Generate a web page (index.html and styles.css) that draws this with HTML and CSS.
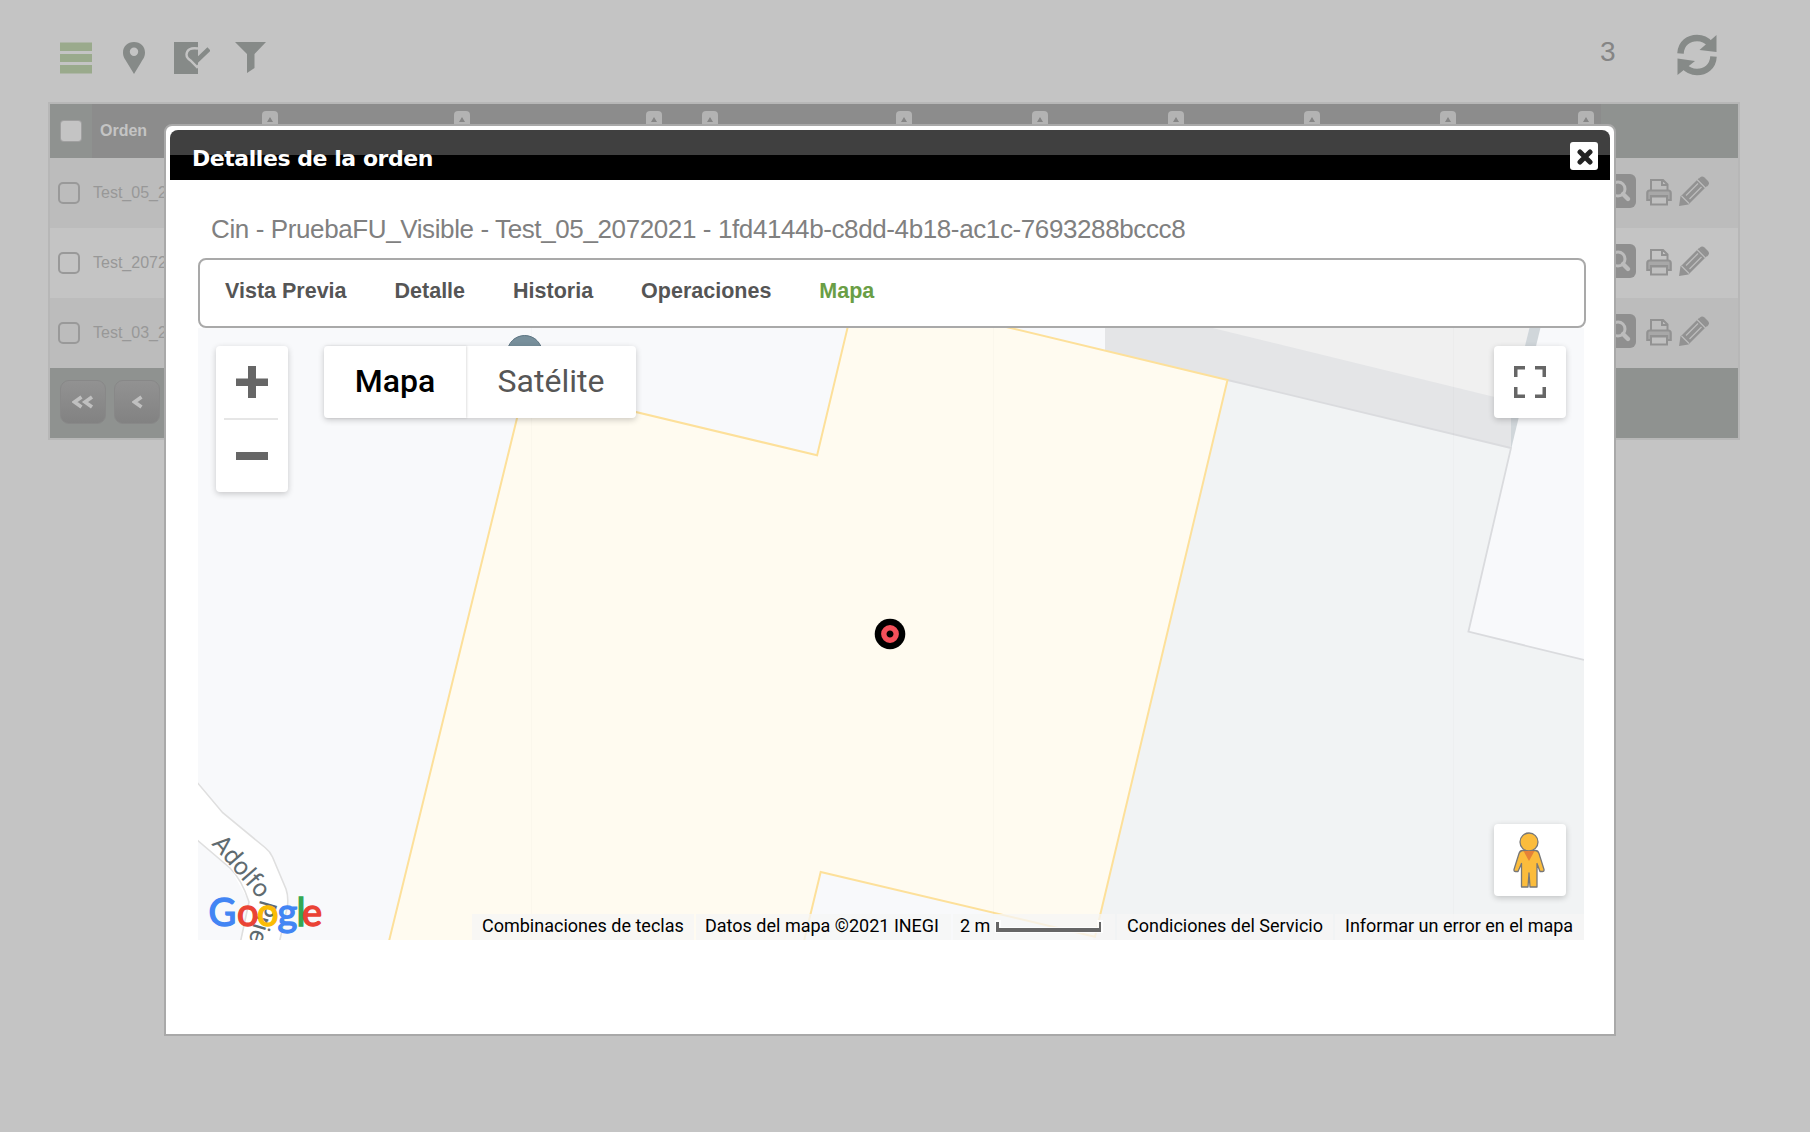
FILE: index.html
```
<!DOCTYPE html>
<html lang="es">
<head>
<meta charset="utf-8">
<title>Detalles de la orden</title>
<link rel="stylesheet" href="styles.css">
</head>
<body>
<svg class="defs" width="0" height="0" aria-hidden="true">
  <symbol id="i-search" viewBox="0 0 34 34">
    <rect width="34" height="34" rx="6" fill="#8f8f8f"/>
    <circle cx="16" cy="15" r="7" fill="none" stroke="#bcbcbc" stroke-width="3"/>
    <path d="M21 20l5 5" stroke="#bcbcbc" stroke-width="4.400" stroke-linecap="round"/>
  </symbol>
  <symbol id="i-print" viewBox="0 0 26 28">
    <path d="M5 12.500V2h12l4.500 4.500v6M16 2v5h5" fill="none" stroke="#929292" stroke-width="2"/>
    <path d="M1.300 22v-7q0-2.500 2.500-2.500h18.400q2.500 0 2.500 2.500v7H21v-4H5v4z" fill="#a8a8a8" stroke="#929292" stroke-width="2.200"/>
    <path d="M5 18.500h16V26.500H5z" fill="#c0c0c0" stroke="#929292" stroke-width="2"/>
  </symbol>
  <symbol id="i-pencil" viewBox="0 0 30 30">
    <path d="M0 30l1.500-9.500L20 2l8 8L9.500 28.500z" fill="#929292"/>
    <path d="M21 1.500q2-2 4.500 0l3.500 3.500q2 2.300 0 4.500l-1 1-8-8z" fill="#929292"/>
    <path d="M18 3.500l8.500 8.500M2.500 20l7.500 7.500M7 19.500L19 7.500M10.500 23L22.500 11" stroke="#bcbcbc" stroke-width="1.300"/>
  </symbol>
</svg>

<main class="page">
  <header class="toolbar">
    <svg class="tool tool-list" width="32" height="32" viewBox="0 0 32 32"><path d="M0 .5h32v8.500H0zM0 12h32v8H0zM0 23h32v8.500H0z" fill="#9aaa8c"/></svg>
    <svg class="tool tool-pin" width="22" height="32" viewBox="0 0 22 32"><path fill-rule="evenodd" d="M11 0C4.500 0 0 4.500 0 10.500 0 15 2 17 4 20.500L11 32l7-11.500c2-3.500 4-5.500 4-10C22 4.500 17.500 0 11 0zm0 5.500a4.200 4.200 0 1 1 0 8.400 4.200 4.200 0 0 1 0-8.400z" fill="#868a88"/></svg>
    <svg class="tool tool-check" width="36" height="32" viewBox="0 0 36 32"><path d="M0 0h24v32H0z" fill="#868a88"/><path d="M24 6.500q-11-1.500-11.500 6 0 3.500 4 6l6.500 6.500 2-2" fill="none" stroke="#c4c4c4" stroke-width="2.400"/><path d="M17 11.500l6.500 6.500L35 7" fill="none" stroke="#868a88" stroke-width="4.600"/></svg>
    <svg class="tool tool-filter" width="31" height="31" viewBox="0 0 31 31"><path d="M0 0h31L19.500 12v14L12 31V12z" fill="#868a88"/></svg>
    <span class="count">3</span>
    <svg class="refresh" width="40" height="42" viewBox="0 0 40 42"><g fill="none" stroke="#868a88" stroke-width="6.500"><path d="M3.500 19.500C4 9 12 4 20 4q8 0 13 6"/><path d="M36.500 22.500C36 33 28 38 20 38q-8 0-13-6"/></g><path d="M39.500 1v17L22.500 16zM.5 41V24.500L18 27z" fill="#868a88"/></svg>
  </header>

  <section class="table">
    <div class="thead">
      <span class="th-check"><i class="hbox"></i></span>
      <span class="th" style="width:193px">Orden<i class="sort"></i></span>
      <span class="th" style="width:192px">Tipo<i class="sort"></i></span>
      <span class="th" style="width:192px">Tarea<i class="sort"></i></span>
      <span class="th" style="width:56px">ID<i class="sort"></i></span>
      <span class="th" style="width:194px">Identificador<i class="sort"></i></span>
      <span class="th" style="width:136px">Auditor<i class="sort"></i></span>
      <span class="th" style="width:136px">Auditor<i class="sort"></i></span>
      <span class="th" style="width:136px">Auditor<i class="sort"></i></span>
      <span class="th" style="width:136px">Auditor<i class="sort"></i></span>
      <span class="th" style="width:138px">Auditor<i class="sort"></i></span>
    </div>
    <div class="row odd"><i class="box"></i><span class="name">Test_05_2072021</span><span class="actions"><svg width="34" height="34"><use href="#i-search"/></svg><svg width="26" height="28"><use href="#i-print"/></svg><svg width="30" height="30"><use href="#i-pencil"/></svg></span></div>
    <div class="row"><i class="box"></i><span class="name">Test_2072021</span><span class="actions"><svg width="34" height="34"><use href="#i-search"/></svg><svg width="26" height="28"><use href="#i-print"/></svg><svg width="30" height="30"><use href="#i-pencil"/></svg></span></div>
    <div class="row odd"><i class="box"></i><span class="name">Test_03_2072021</span><span class="actions"><svg width="34" height="34"><use href="#i-search"/></svg><svg width="26" height="28"><use href="#i-print"/></svg><svg width="30" height="30"><use href="#i-pencil"/></svg></span></div>
    <div class="tfoot">
      <span class="pager"><svg width="22" height="14" viewBox="0 0 22 14"><path d="M9.500 2L2.500 7l7 5M20 2l-7 5 7 5"/></svg></span>
      <span class="pager"><svg width="11" height="14" viewBox="0 0 11 14"><path d="M9.500 2L2.500 7l7 5"/></svg></span>
    </div>
  </section>
</main>

<section class="modal">
  <header class="modal-head">
    <h1>Detalles de la orden</h1>
    <span class="close"><svg width="16" height="16" viewBox="0 0 16 16"><path d="M3 3l10 10M13 3L3 13" stroke="#222" stroke-width="5" stroke-linecap="round"/></svg></span>
  </header>
  <h2 class="subject">Cin - PruebaFU_Visible - Test_05_2072021 - 1fd4144b-c8dd-4b18-ac1c-7693288bccc8</h2>
  <nav class="tabs">
    <a>Vista Previa</a><a>Detalle</a><a>Historia</a><a>Operaciones</a><a class="active">Mapa</a>
  </nav>
  <div class="map">
    <svg class="canvas" width="1386" height="612" viewBox="198 328 1386 612">
      <rect x="198" y="328" width="1386" height="612" fill="#f8f9fb"/>
      <path d="M1227 380L1511 448 1468.400 631.700 1584 660V940H1093z" fill="#f1f3f4"/>
      <path d="M1105 328V351L1227.500 380 1511 448V328z" fill="#e4e5e7"/>
      <path d="M1212.600 328L1511 401V328z" fill="#f0f0f0"/>
      <path d="M1511 328L1529.400 328 1511 403z" fill="#f0f0f0"/>
      <path d="M1529.400 328H1540.400L1511.500 447.500H1511V403z" fill="#d0d6da"/>
      <path d="M1227.500 380L1511 448 1468.400 631.700 1584 660" fill="none" stroke="#dadbde" stroke-width="1.800"/>
      <path d="M525 385.500L817.100 455.300 847.500 328V320H975L1010.700 328 1227.500 380 1095 936.700 820.700 872 803.300 944H388.300z" fill="#fffbf0" stroke="#fde09a" stroke-width="2"/>
      <path d="M198 783L222.700 812.700 265 847.500Q270 851.500 272.500 857L286 889Q288.500 896 287.500 906L279 944H240L249 902 230 868 198 841z" fill="#fff"/>
      <path d="M196 781L222.700 812.700 265 847.500Q270 851.500 272.500 857L286 889Q288.500 896 287.500 906L279 944M196 839L230 868Q242 880 249 902L240 944" fill="none" stroke="#dfdfdf" stroke-width="1.600"/>
      <path d="M531.500 328V940M993.500 328V940M1453.500 328V940" stroke="#000" stroke-opacity=".014"/>
      <circle cx="524.700" cy="353" r="17.500" fill="#78909c" stroke="#5c7482"/>
      <text class="street-name" transform="translate(211 844) rotate(49)">Adolfo</text>
      <text class="street-name" transform="translate(260.500 899) rotate(106)">Prieto</text>
      <g transform="translate(890 634)"><circle r="15.300" fill="#000"/><circle r="6.200" fill="none" stroke="#f4505a" stroke-width="5.400"/></g>
      <text class="google" y="926"><tspan x="208.500" class="blue">G</tspan><tspan x="237" class="red">o</tspan><tspan x="257" class="yellow">o</tspan><tspan x="277.500" class="blue">g</tspan><tspan x="296.500" class="green">l</tspan><tspan x="302" class="red">e</tspan></text>
    </svg>
    <div class="ctl zoomer">
      <svg width="72" height="146" viewBox="0 0 72 146"><path d="M20 32.500h12V20h8v12.500h12v7.500H40v12h-8V40H20zM20 106h32v8H20z" fill="#666"/><path d="M8 72h54v2H8z" fill="#e6e6e6"/></svg>
    </div>
    <div class="ctl types"><span class="type on">Mapa</span><span class="type">Satélite</span></div>
    <div class="ctl full"><svg width="32" height="32" viewBox="0 0 32 32"><path d="M1.750 11V1.750H11M21 1.750h9.250V11M30.250 21v9.250H21M11 30.250H1.750V21" fill="none" stroke="#666" stroke-width="3.500"/></svg></div>
    <div class="ctl pegman"><svg width="32" height="56" viewBox="0 0 32 56"><g fill="#fbbc3c" stroke="#777" stroke-width="1.300" stroke-linejoin="round"><path d="M9.500 18.500h13q2.500 0 3.500 3l5 16q.3 2-1.500 2H27l-3-8V55h-7L16 41l-1 14H8.500V31.500L5 39.500H2.500Q.8 39.500 1 37.500l5-16q1-3 3.500-3z"/><circle cx="16" cy="10" r="9"/></g><path d="M10.500 19h11L16 29z" fill="#e58137"/></svg></div>
    <footer class="legal">
      <span class="lg keys">Combinaciones de teclas</span>
      <span class="lg data">Datos del mapa ©2021 INEGI</span>
      <span class="lg scale">2 m<svg width="108" height="14" viewBox="0 0 108 14"><path d="M0 0h6v7h96V0h6v13H0z" fill="#fff" fill-opacity=".8"/><path d="M1 2h3v6h100V2h2v10H1z" fill="#666"/></svg></span>
      <span class="lg terms">Condiciones del Servicio</span>
      <span class="lg report">Informar un error en el mapa</span>
    </footer>
  </div>
</section>
</body>
</html>
```
FILE: styles.css
```
* { box-sizing: border-box; }
body {
  margin: 0;
  width: 1810px;
  height: 1132px;
  overflow: hidden;
  position: relative;
  background: #c4c4c4;
  font-family: "Liberation Sans", Arial, sans-serif;
}
svg { display: block; flex: none; }
.defs { position: absolute; }
.page { padding: 0 70px 0 48px; }

.toolbar { display: flex; height: 102px; padding: 42px 0 0 12px; }
.tool-pin { margin-left: 31px; }
.tool-check { margin-left: 29px; }
.tool-filter { margin-left: 25px; }
.count { margin: -6px 0 0 auto; width: 77px; font-size: 28px; line-height: 32px; color: #858585; }
.refresh { margin: -8px 23px 0 0; }

.table { border: 2px solid #b7b7b7; height: 338px; overflow: hidden; }
.thead { display: flex; height: 54px; background: #8f9290; }
.th-check { width: 42px; padding: 17px 0 0 11px; }
.hbox { display: block; width: 20px; height: 20px; border-radius: 3px; background: #c4c4c4; box-shadow: 0 0 0 1px #a0a0a0; }
.th {
  display: flex;
  justify-content: space-between;
  padding: 17px 7px 0 8px;
  background: #8c8c8c;
  color: #c4c4c4;
  font-size: 16px;
  font-weight: bold;
  line-height: 20px;
}
.sort { width: 16px; height: 20px; margin: -10px 0 0 0; border-radius: 4px; background: #b3b3b3; flex: none; padding: 6px 0 0 5px; }
.sort::before { content: ""; display: block; border: solid transparent; border-width: 0 3px 5px; border-bottom-color: #858585; width: 0; }
.row { display: flex; align-items: center; height: 70px; padding: 0 29px 0 8px; }
.row.odd { background: #bcbcbc; }
.box { width: 22px; height: 22px; border: 2px solid #999; border-radius: 5px; flex: none; }
.name { margin: -1px 0 0 13px; font-size: 16px; line-height: 20px; color: #989898; }
.actions { display: flex; align-items: center; margin: -5px 0 0 auto; }
.actions svg:nth-child(2) { margin: 2px 7px 0 10px; }
.tfoot { display: flex; height: 70px; padding: 12px 10px; gap: 8px; background: #8f9290; }
.pager {
  display: flex;
  align-items: center;
  justify-content: center;
  width: 46px;
  height: 44px;
  border: 1px solid #888;
  border-radius: 9px;
  background: linear-gradient(#929292, #828282);
}
.pager path { fill: none; stroke: #c0c0c0; stroke-width: 3.6; }

.modal {
  position: absolute;
  left: 164px;
  top: 124px;
  width: 1452px;
  height: 912px;
  padding: 4px;
  background: #fff;
  border: 2px solid #a9a9a9;
  border-radius: 8px 8px 0 0;
}
.modal-head {
  display: flex;
  align-items: center;
  justify-content: space-between;
  height: 50px;
  padding: 0 12px 0 22px;
  border-radius: 8px 8px 0 0;
  background: linear-gradient(#404040 50%, #000 50%);
}
.modal-head h1 { margin: 7px 0 0; font: bold 22px/30px "DejaVu Sans", sans-serif; letter-spacing: -.45px; color: #fff; }
.close { display: flex; align-items: center; justify-content: center; width: 28px; height: 28px; margin-top: 2px; padding: 2px 0 0 1px; border-radius: 3px; background: #fff; }
.subject { margin: 33px 0 0 41px; height: 45px; font-size: 26px; line-height: 32px; font-weight: normal; letter-spacing: -.39px; color: #808080; white-space: nowrap; }
.tabs {
  display: flex;
  gap: 48px;
  width: 1388px;
  height: 70px;
  margin-left: 28px;
  padding: 19px 0 0 25px;
  border: 2px solid #a9a9a9;
  border-radius: 8px;
  font-size: 21.5px;
  font-weight: bold;
  line-height: 25px;
  color: #555;
}
.tabs .active { color: #6a9e45; }

.map { position: relative; width: 1386px; height: 612px; margin-left: 28px; overflow: hidden; font-family: Roboto, sans-serif; }
.street-name { font: 25px Roboto, sans-serif; fill: #5f6b70; stroke: #fff; stroke-width: 2px; paint-order: stroke; }
.google { font: 38px Lato, sans-serif; stroke-width: 1.4px; }
.blue { fill: #4285f4; stroke: #4285f4; }
.red { fill: #ea4335; stroke: #ea4335; }
.yellow { fill: #fbbc05; stroke: #fbbc05; }
.green { fill: #34a853; stroke: #34a853; }
.ctl { position: absolute; display: flex; align-items: center; justify-content: center; background: #fff; border-radius: 4px; box-shadow: 0 2px 6px rgba(0, 0, 0, .2); }
.zoomer { left: 18px; top: 18px; width: 72px; height: 146px; }
.types { left: 126px; top: 18px; width: 312px; height: 72px; }
.type { width: 170px; height: 72px; font-size: 32px; line-height: 70px; text-align: center; color: #565656; }
.type.on { width: 142px; font-weight: 500; color: #000; box-shadow: 1px 0 2px rgba(0, 0, 0, .12); }
.full { left: 1296px; top: 18px; width: 72px; height: 72px; }
.pegman { left: 1296px; top: 496px; width: 72px; height: 72px; padding-right: 2px; }
.legal { position: absolute; right: 0; bottom: 0; display: flex; gap: 2px; font-size: 18px; line-height: 24px; color: #000; white-space: nowrap; }
.lg { height: 26px; padding-left: 10px; background: rgba(245, 245, 245, .75); }
.keys { width: 222px; }
.data { width: 255px; padding-left: 9px; }
.scale { width: 162px; padding-left: 7px; display: flex; }
.scale svg { margin: 6px 0 0 5px; }
.terms { width: 216px; }
.report { width: 249px; }
```
